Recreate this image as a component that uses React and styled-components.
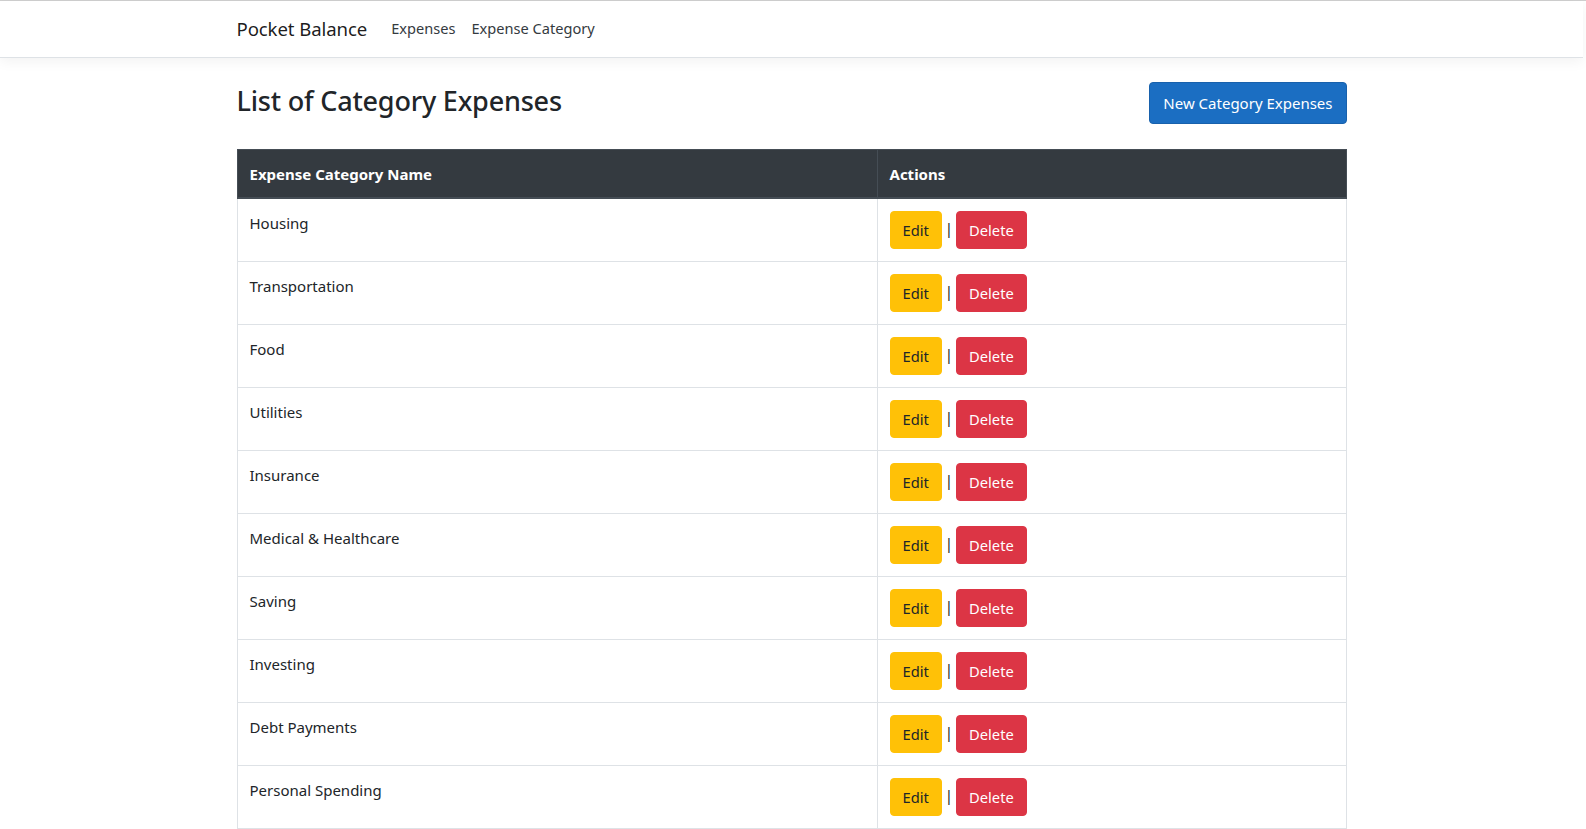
import React from 'react'
import styled, { createGlobalStyle } from 'styled-components'

const GlobalStyle = createGlobalStyle`
  html, body {
    margin: 0;
    padding: 0;
    background: #fff;
  }
  body {
    font-family: "Noto Sans", "Open Sans", "Liberation Sans", sans-serif;
    font-size: 15px;
    line-height: 1.5;
    color: #212529;
  }
  ::-webkit-scrollbar {
    width: 3px;
  }
  ::-webkit-scrollbar-track {
    background: #f1f1f1;
  }
  ::-webkit-scrollbar-thumb {
    background: #c1c1c1;
  }
`

const categories = [
  'Housing',
  'Transportation',
  'Food',
  'Utilities',
  'Insurance',
  'Medical & Healthcare',
  'Saving',
  'Investing',
  'Debt Payments',
  'Personal Spending'
]

const Page = styled.div`
  min-height: 1075px;
  border-top: 1px solid #cfcfcf;
  box-sizing: border-box;
  padding-right: 3px;
`

const Navbar = styled.header`
  height: 56px;
  border-bottom: 1px solid #dee2e6;
  box-shadow: 0 4px 12px rgba(0, 0, 0, 0.05);
`

const Container = styled.div`
  width: 1110px;
  margin: 0 auto;
`

const NavInner = styled(Container)`
  display: flex;
  align-items: center;
  height: 100%;
`

const Brand = styled.a`
  font-size: 18.6px;
  color: rgba(0, 0, 0, 0.9);
  margin-right: 16px;
  text-decoration: none;
  letter-spacing: -0.1px;
`

const NavLink = styled.a`
  font-size: 14.6px;
  color: #343a40;
  padding: 8px;
  text-decoration: none;
`

const Main = styled.main`
  padding-top: 24px;
`

const TitleRow = styled.div`
  display: flex;
  align-items: center;
  justify-content: space-between;
  height: 42px;
  margin-bottom: 25px;
`

const Title = styled.h3`
  margin: 0 0 4px;
  font-size: 27px;
  font-weight: 500;
  line-height: 1.2;
  color: #212529;
  letter-spacing: -0.2px;
`

const Button = styled.button`
  font-family: inherit;
  font-size: 15px;
  line-height: 24px;
  padding: 6px 12px;
  border-radius: 4px;
  border: 1px solid ${(p) => p.$border};
  background: ${(p) => p.$bg};
  color: ${(p) => p.$color};
  cursor: pointer;
`

const RowButton = styled(Button)`
  font-size: 14.7px;
`

const PrimaryButton = styled(Button)`
  padding: 8px 13px;
`

const Table = styled.table`
  width: 100%;
  border-collapse: collapse;
  border: 1px solid #dee2e6;
`

const Th = styled.th`
  background: #343a40;
  color: #fff;
  font-weight: 700;
  text-align: left;
  padding: 12px 12px 11px;
  border: 1px solid #454d55;
  border-bottom-width: 2px;
  font-size: 15px;
  line-height: 24px;
  width: ${(p) => p.$width || 'auto'};
`

const Td = styled.td`
  padding: 12px;
  border: 1px solid #dee2e6;
  vertical-align: top;
  height: 38px;
  line-height: 24px;
`

const Actions = styled.div`
  display: flex;
  align-items: center;
  gap: 3px;
`

const Separator = styled.span`
  color: #212529;
  margin-top: -4px;
`

export default function App() {
  return (
    <Page>
      <GlobalStyle />
      <Navbar>
        <NavInner>
          <Brand href="#">Pocket Balance</Brand>
          <NavLink href="#">Expenses</NavLink>
          <NavLink href="#">Expense Category</NavLink>
        </NavInner>
      </Navbar>
      <Main>
        <Container>
          <TitleRow>
            <Title>List of Category Expenses</Title>
            <PrimaryButton $bg="#1b6ec2" $border="#1861ac" $color="#fff">
              New Category Expenses
            </PrimaryButton>
          </TitleRow>
          <Table>
            <thead>
              <tr>
                <Th $width="615px">Expense Category Name</Th>
                <Th>Actions</Th>
              </tr>
            </thead>
            <tbody>
              {categories.map((name) => (
                <tr key={name}>
                  <Td>{name}</Td>
                  <Td>
                    <Actions>
                      <RowButton $bg="#ffc107" $border="#ffc107" $color="#212529">
                        Edit
                      </RowButton>
                      <Separator>|</Separator>
                      <RowButton $bg="#dc3545" $border="#dc3545" $color="#fff">
                        Delete
                      </RowButton>
                    </Actions>
                  </Td>
                </tr>
              ))}
            </tbody>
          </Table>
        </Container>
      </Main>
    </Page>
  )
}
